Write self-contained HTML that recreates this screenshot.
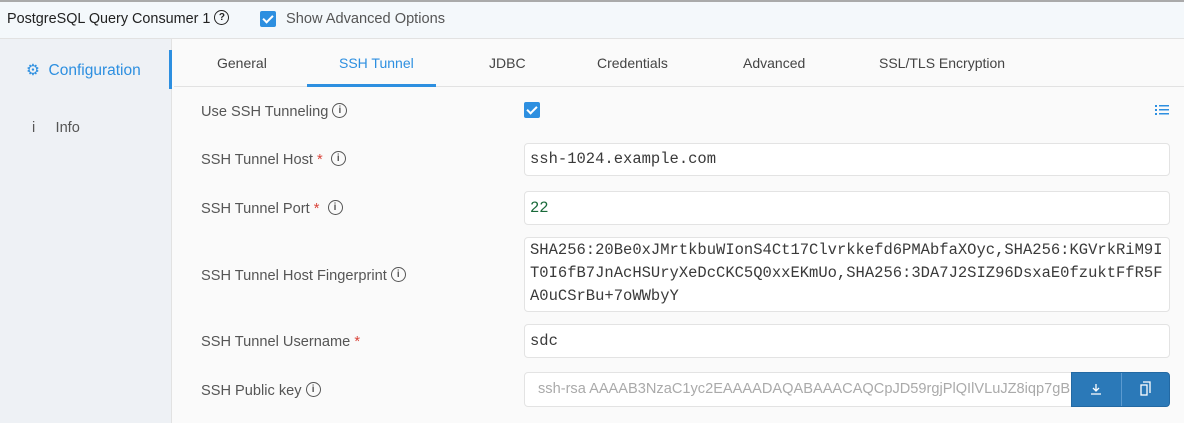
<!DOCTYPE html>
<html><head><style>
*{box-sizing:border-box;margin:0;padding:0}
body{width:1184px;height:423px;overflow:hidden;background:#fafafa;font-family:"Liberation Sans",sans-serif;color:#444;position:relative}
.top{position:absolute;left:0;top:0;width:1184px;height:39px;background:#f4f8fb;border-top:2px solid #aaa;border-bottom:1px solid #e2e2e2}
.side{position:absolute;left:0;top:39px;width:172px;height:384px;background:#eef1f5;border-right:1px solid #e2e2e2}
.abs{position:absolute;white-space:nowrap}
.info{display:inline-block;width:15px;height:15px;border:1.3px solid #555;border-radius:50%;font-size:10px;line-height:13px;text-align:center;font-weight:bold;vertical-align:middle;color:#555;margin-top:-3px}
.cb{position:absolute;width:16px;height:16px;background:#2d8fe0;border-radius:2px}
.cb:after{content:"";position:absolute;left:5px;top:2px;width:4px;height:8px;border:solid #fff;border-width:0 2px 2px 0;transform:rotate(45deg)}
.tab{position:absolute;top:55px;font-size:14px;color:#444}
.lbl{position:absolute;left:201px;font-size:14.6px;color:#555;white-space:nowrap}
.star{color:#d9443a}
.inp{position:absolute;left:524px;width:646px;background:#fff;border:1px solid #e3e3e3;border-radius:4px;font-family:"Liberation Mono",monospace;font-size:15.5px;color:#3a3a3a;padding:0 5px}
</style></head><body>
<div class="top"></div>
<div class="abs" style="left:7px;top:11px;font-size:14.4px;color:#222">PostgreSQL Query Consumer 1 <span class="info" style="border-color:#222;color:#222">?</span></div>
<div class="cb" style="left:260px;top:11px"></div>
<div class="abs" style="left:286px;top:11px;font-size:14.6px;color:#555">Show Advanced Options</div>
<div class="side"></div>
<div class="abs" style="left:169px;top:50px;width:3px;height:39px;background:#2d8fe0"></div>
<div class="abs" style="left:26px;top:61px;font-size:15.5px;color:#2d8fe0"><span>⚙</span>&nbsp; Configuration</div>
<div class="abs" style="left:32px;top:120px;font-size:14.6px;color:#555">i&nbsp;&nbsp;&nbsp;&nbsp; Info</div>
<div class="abs" style="left:174px;top:86px;width:1010px;height:1px;background:#e2e2e2"></div>
<div class="tab" style="left:217px">General</div>
<div class="tab" style="left:339px;color:#2d8fe0">SSH Tunnel</div>
<div class="abs" style="left:307px;top:84px;width:129px;height:3px;background:#2d8fe0"></div>
<div class="tab" style="left:489px">JDBC</div>
<div class="tab" style="left:597px">Credentials</div>
<div class="tab" style="left:743px">Advanced</div>
<div class="tab" style="left:879px">SSL/TLS Encryption</div>
<div class="lbl" style="top:104px">Use SSH Tunneling <span class="info">i</span></div>
<div class="cb" style="left:524px;top:102px"></div>
<svg class="abs" style="left:1155px;top:104px" width="15" height="12"><g fill="#2d8fe0"><rect x="0" y="1" width="2" height="2"/><rect x="4" y="1" width="10" height="1.5"/><rect x="0" y="5" width="2" height="2"/><rect x="4" y="5" width="10" height="1.5"/><rect x="0" y="9" width="2" height="2"/><rect x="4" y="9" width="10" height="1.5"/></g></svg>
<div class="lbl" style="top:152px">SSH Tunnel Host <span class="star">*</span>&nbsp; <span class="info">i</span></div>
<div class="inp" style="top:143px;height:33px;line-height:31px">ssh-1024.example.com</div>
<div class="lbl" style="top:201px">SSH Tunnel Port <span class="star">*</span>&nbsp; <span class="info">i</span></div>
<div class="inp" style="top:191px;height:34px;line-height:32px;color:#1a6a3a">22</div>
<div class="lbl" style="top:268px">SSH Tunnel Host Fingerprint <span class="info">i</span></div>
<div class="inp" style="top:237px;height:75px;line-height:23px;padding-top:1px;white-space:pre">SHA256:20Be0xJMrtkbuWIonS4Ct17Clvrkkefd6PMAbfaXOyc,SHA256:KGVrkRiM9I
T0I6fB7JnAcHSUryXeDcCKC5Q0xxEKmUo,SHA256:3DA7J2SIZ96DsxaE0fzuktFfR5F
A0uCSrBu+7oWWbyY</div>
<div class="lbl" style="top:334px">SSH Tunnel Username <span class="star">*</span></div>
<div class="inp" style="top:324px;height:34px;line-height:32px">sdc</div>
<div class="lbl" style="top:383px">SSH Public key <span class="info">i</span></div>
<div class="inp" style="top:372px;height:35px;line-height:33px;font-family:'Liberation Sans',sans-serif;font-size:14.6px;color:#aaa;overflow:hidden;white-space:nowrap;padding-left:13px">ssh-rsa AAAAB3NzaC1yc2EAAAADAQABAAACAQCpJD59rgjPlQIlVLuJZ8iqp7gB</div>
<div class="abs" style="left:1071px;top:372px;width:99px;height:35px;background:#2b79b8;border-radius:0 4px 4px 0;border:1px solid #2369a3"></div>
<div class="abs" style="left:1121px;top:373px;width:1px;height:33px;background:#5b9ad0"></div>
<svg class="abs" style="left:1089px;top:382px" width="14" height="14"><path d="M7 2v7M4 6l3 3 3-3M2 12h10" stroke="#fff" stroke-width="1.3" fill="none"/></svg>
<svg class="abs" style="left:1139px;top:381px" width="14" height="16"><path d="M4 1h7v11" stroke="#fff" stroke-width="1.3" fill="none"/><rect x="2" y="4" width="6" height="10" stroke="#fff" stroke-width="1.3" fill="none"/></svg>
</body></html>
